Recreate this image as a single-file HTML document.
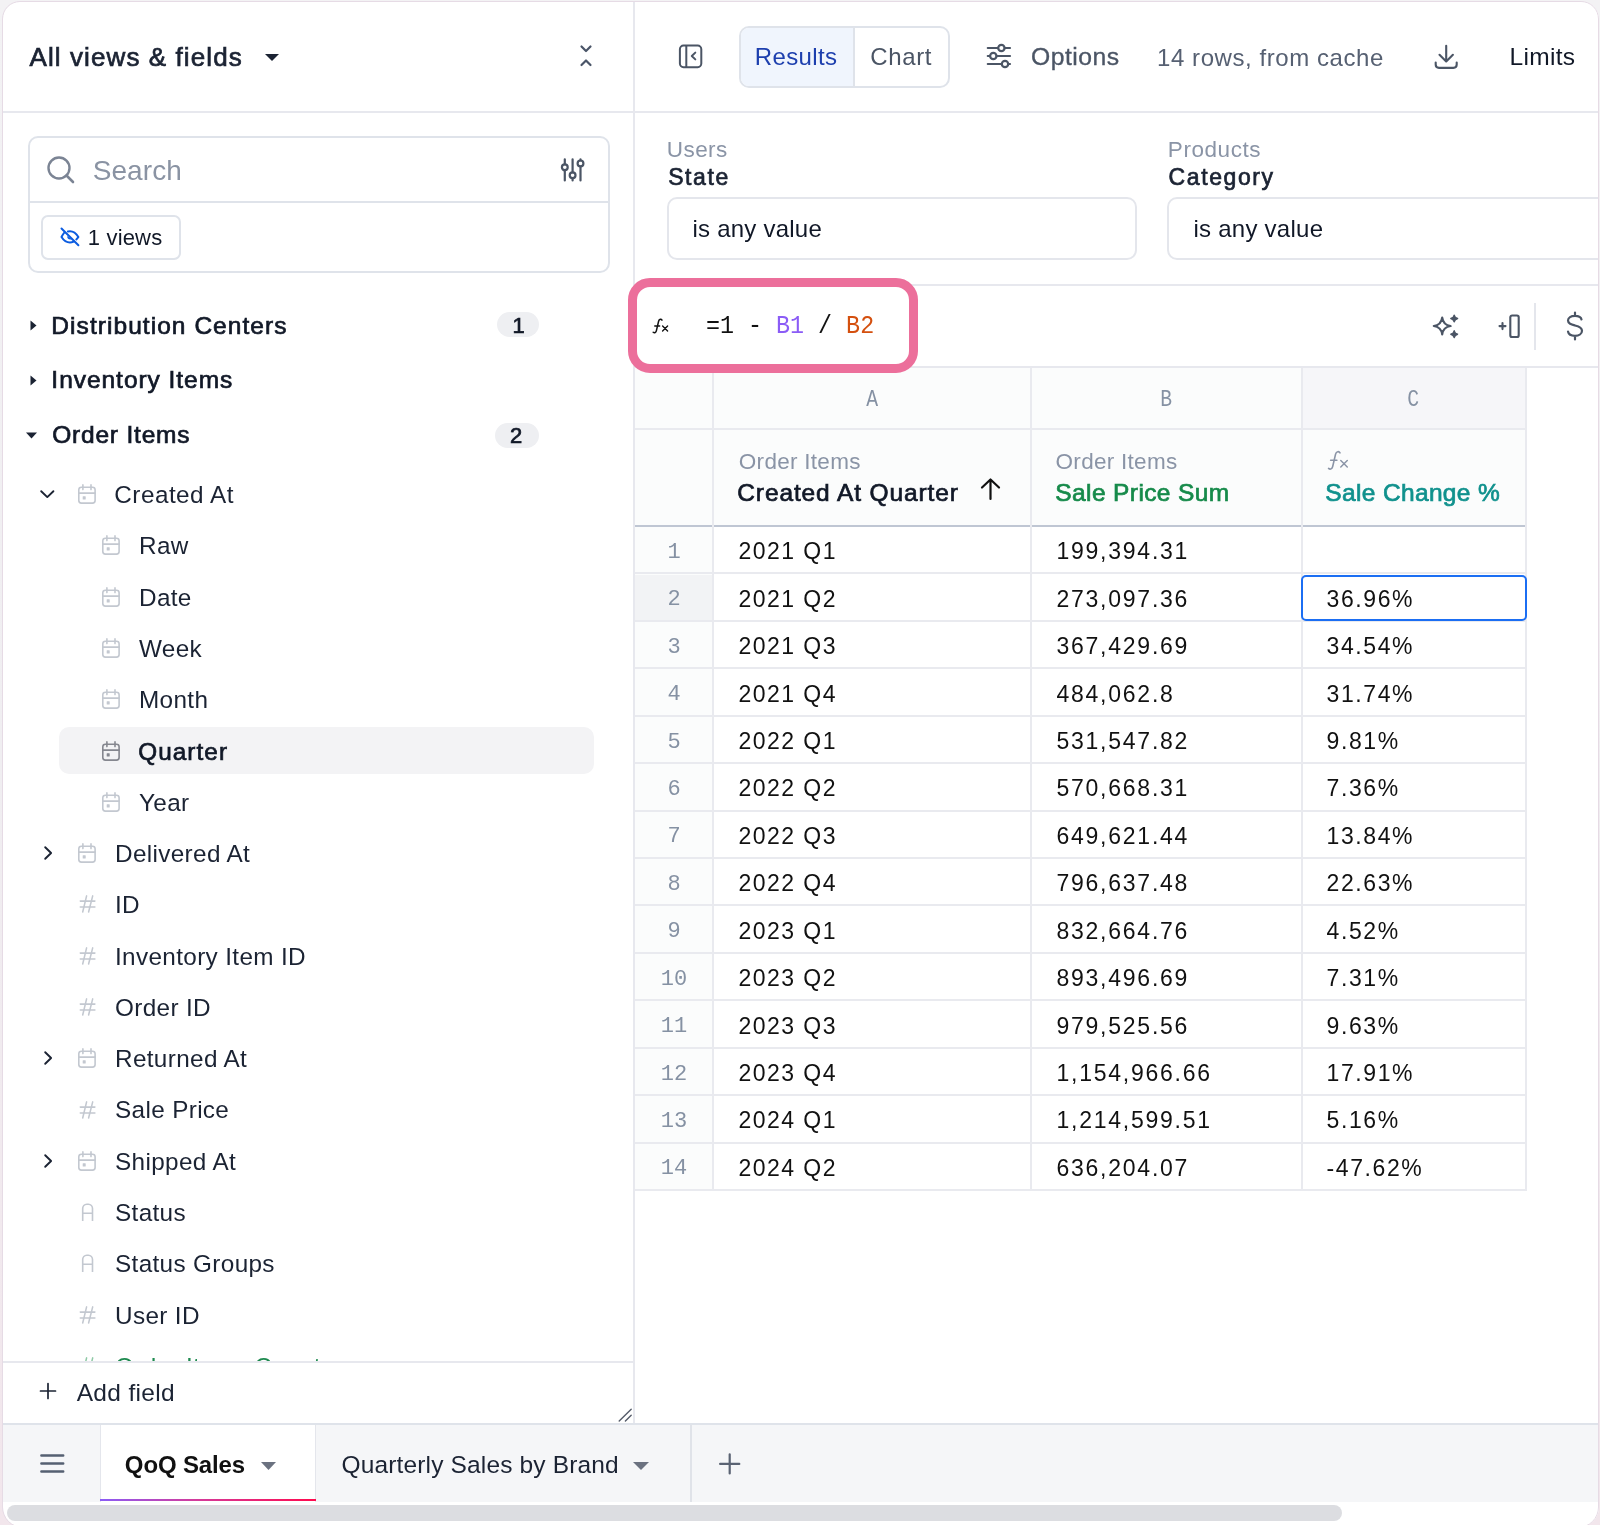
<!DOCTYPE html>
<html><head><meta charset="utf-8">
<style>
*{box-sizing:border-box;margin:0;padding:0}
html,body{width:1600px;height:1525px;overflow:hidden;background:#efeff1;font-family:"Liberation Sans",sans-serif;color:#1b2333}
#bg{position:absolute;left:0;top:0;width:1600px;height:1525px;background:linear-gradient(180deg,#f3f2f4 0%,#f0eef1 50%,#f2e6ec 100%)}
#clip{position:absolute;left:2.5px;top:1.5px;width:1596px;height:1525px;border-radius:17px 17px 20px 20px;overflow:hidden;background:#fff}
#app{position:absolute;left:-2.5px;top:-1.5px;width:1600px;height:1525px;will-change:opacity;opacity:0.999}
#frame{position:absolute;left:2.2px;top:0.8px;width:1597.1px;height:1527px;border-style:solid;border-color:#e6dbe5;border-width:1.3px 1.4px 1.6px 1.9px;border-radius:18px 18px 21px 21px;pointer-events:none}
.a{position:absolute}
.t{position:absolute;white-space:nowrap;line-height:1}
svg{position:absolute;overflow:visible}
</style></head>
<body>
<div id="bg"></div>
<div id="clip"><div id="app">
<div class="t" id="t_allviews" style="left:29.53px;top:43.99px;font-size:26px;color:#1b2333;-webkit-text-stroke:0.7px currentColor;letter-spacing:1.092px;">All views &amp; fields</div>
<svg style="left:265px;top:53.5px;" width="14" height="7" viewBox="0 0 14 7"><path d="M0 0H14L7 7Z" fill="#1b2333"/></svg>
<svg style="left:579px;top:44px;" width="14" height="24" viewBox="0 0 14 24"><path d="M2.5 2.5L7 7L11.5 2.5M2.5 21L7 16.5L11.5 21" fill="none" stroke="#4a5568" stroke-width="2.2" stroke-linecap="round" stroke-linejoin="round"/></svg>
<div class="a" style="left:0px;top:111px;width:1600px;height:2px;background:#e7e8ee"></div>
<div class="a" style="left:633px;top:0px;width:2px;height:1423px;background:#e7e8ee"></div>
<div class="a" style="left:27.75px;top:136.25px;width:582px;height:136.65px;border:2px solid #dfe3ea;border-radius:10px;"></div>
<div class="a" style="left:27.75px;top:200.9px;width:582px;height:2px;background:#dfe3ea"></div>
<svg style="left:46px;top:155px;" width="30" height="30" viewBox="0 0 30 30"><circle cx="13" cy="13" r="10.5" fill="none" stroke="#7b8494" stroke-width="2.4"/><path d="M20.5 20.5L27 27" stroke="#7b8494" stroke-width="2.6" stroke-linecap="round"/></svg>
<div class="t" id="t_search" style="left:92.64px;top:156.90px;font-size:28px;color:#8a93a3;letter-spacing:0.1px;">Search</div>
<svg style="left:560px;top:157px;" width="26" height="26" viewBox="0 0 26 26"><g fill="none" stroke="#4b5565" stroke-width="2.2" stroke-linecap="round"><path d="M4.8 2.3V7.3M4.8 13.3V23.4M12.6 2.3V15.3M12.6 21.3V23.4M20.5 2.3V3.5M20.5 9.5V23.4"/><circle cx="4.8" cy="10.3" r="2.9"/><circle cx="12.6" cy="18.3" r="2.9"/><circle cx="20.5" cy="6.4" r="2.9"/></g></svg>
<div class="a" style="left:40.9px;top:215px;width:139.85px;height:44.5px;border:2px solid #dfe3ea;border-radius:7px;"></div>
<svg style="left:60px;top:227px;" width="20" height="20" viewBox="0 0 20 20"><g fill="none" stroke="#0b5ce0" stroke-width="2" stroke-linecap="round" stroke-linejoin="round"><path d="M7.9 4.4C9 4.3 9.6 4.3 10 4.3C13.5 4.3 16.2 6.5 18.4 10C17.8 11 17.1 11.7 16.3 12.4"/><path d="M4.3 5.6C3.3 6.6 2.4 8.1 1.5 10C3.7 13.5 6.5 15.4 10 15.4C11.5 15.4 12.7 15 13.9 14.6"/><path d="M1.5 1.5L18.4 18.2"/></g><path d="M7.2 9C7 10.8 8 12.6 10.4 12.6C11 12.6 11.4 12.5 11.8 12.3Z" fill="#0b5ce0"/></svg>
<div class="t" id="t_1views" style="left:87.80px;top:226.88px;font-size:22px;color:#111827;letter-spacing:0.166px;">1 views</div>
<svg style="left:29.5px;top:320px;" width="7" height="11" viewBox="0 0 7 11"><path d="M0.5 0.5L6.5 5.5L0.5 10.5Z" fill="#1b2333"/></svg>
<div class="t" id="t_dc" style="left:51.36px;top:313.66px;font-size:24.5px;color:#111827;-webkit-text-stroke:0.7px currentColor;letter-spacing:1.051px;">Distribution Centers</div>
<div class="a" style="left:496.5px;top:312px;width:42.5px;height:25px;background:#eeeff2;border-radius:13px"></div>
<div class="t" style="left:512.50px;top:314.58px;font-size:22px;color:#111827;-webkit-text-stroke:0.7px currentColor;">1</div>
<svg style="left:29.5px;top:375px;" width="7" height="11" viewBox="0 0 7 11"><path d="M0.5 0.5L6.5 5.5L0.5 10.5Z" fill="#1b2333"/></svg>
<div class="t" id="t_ii" style="left:51.36px;top:368.46px;font-size:24.5px;color:#111827;-webkit-text-stroke:0.7px currentColor;letter-spacing:0.964px;">Inventory Items</div>
<svg style="left:26px;top:432px;" width="11" height="7" viewBox="0 0 11 7"><path d="M0 0.5H11L5.5 6.5Z" fill="#1b2333"/></svg>
<div class="t" id="t_oi" style="left:52.14px;top:423.46px;font-size:24.5px;color:#111827;-webkit-text-stroke:0.7px currentColor;letter-spacing:0.81px;">Order Items</div>
<div class="a" style="left:494.5px;top:422.5px;width:44.5px;height:25px;background:#eeeff2;border-radius:13px"></div>
<div class="t" style="left:510.00px;top:424.68px;font-size:22px;color:#111827;-webkit-text-stroke:0.7px currentColor;">2</div>
<svg style="left:78px;top:484.2px;" width="18" height="19" viewBox="0 0 18 19"><g fill="none" stroke="#c3c8d0" stroke-width="1.6" stroke-linecap="round"><rect x="0.8" y="3.2" width="16.3" height="15.9" rx="2.6"/><path d="M0.8 9.1H17.1M4.9 0.9V5.6M13 0.9V5.6"/></g><rect x="4.7" y="12.2" width="3" height="3.4" rx="0.5" fill="#c3c8d0"/></svg>
<svg style="left:40px;top:489.5px;" width="15" height="9" viewBox="0 0 15 9"><path d="M1.2 1.2L7.3 7.1L13.4 1.2" fill="none" stroke="#1b2333" stroke-width="1.9" stroke-linecap="round" stroke-linejoin="round"/></svg>
<div class="t" id="t_item0" style="left:114.30px;top:483.13px;font-size:24.3px;color:#1b2333;letter-spacing:0.479px;">Created At</div>
<svg style="left:101.5px;top:535.48px;" width="18" height="19" viewBox="0 0 18 19"><g fill="none" stroke="#c3c8d0" stroke-width="1.6" stroke-linecap="round"><rect x="0.8" y="3.2" width="16.3" height="15.9" rx="2.6"/><path d="M0.8 9.1H17.1M4.9 0.9V5.6M13 0.9V5.6"/></g><rect x="4.7" y="12.2" width="3" height="3.4" rx="0.5" fill="#c3c8d0"/></svg>
<div class="t" id="t_item1" style="left:139.00px;top:534.41px;font-size:24.3px;color:#1b2333;letter-spacing:0.35px;">Raw</div>
<svg style="left:101.5px;top:586.76px;" width="18" height="19" viewBox="0 0 18 19"><g fill="none" stroke="#c3c8d0" stroke-width="1.6" stroke-linecap="round"><rect x="0.8" y="3.2" width="16.3" height="15.9" rx="2.6"/><path d="M0.8 9.1H17.1M4.9 0.9V5.6M13 0.9V5.6"/></g><rect x="4.7" y="12.2" width="3" height="3.4" rx="0.5" fill="#c3c8d0"/></svg>
<div class="t" id="t_item2" style="left:139.00px;top:585.69px;font-size:24.3px;color:#1b2333;letter-spacing:0.35px;">Date</div>
<svg style="left:101.5px;top:638.04px;" width="18" height="19" viewBox="0 0 18 19"><g fill="none" stroke="#c3c8d0" stroke-width="1.6" stroke-linecap="round"><rect x="0.8" y="3.2" width="16.3" height="15.9" rx="2.6"/><path d="M0.8 9.1H17.1M4.9 0.9V5.6M13 0.9V5.6"/></g><rect x="4.7" y="12.2" width="3" height="3.4" rx="0.5" fill="#c3c8d0"/></svg>
<div class="t" id="t_item3" style="left:139.00px;top:636.97px;font-size:24.3px;color:#1b2333;letter-spacing:0.35px;">Week</div>
<svg style="left:101.5px;top:689.3199999999999px;" width="18" height="19" viewBox="0 0 18 19"><g fill="none" stroke="#c3c8d0" stroke-width="1.6" stroke-linecap="round"><rect x="0.8" y="3.2" width="16.3" height="15.9" rx="2.6"/><path d="M0.8 9.1H17.1M4.9 0.9V5.6M13 0.9V5.6"/></g><rect x="4.7" y="12.2" width="3" height="3.4" rx="0.5" fill="#c3c8d0"/></svg>
<div class="t" id="t_item4" style="left:139.00px;top:688.25px;font-size:24.3px;color:#1b2333;letter-spacing:0.35px;">Month</div>
<div class="a" style="left:59px;top:726.5px;width:535px;height:47.5px;background:#f3f3f5;border-radius:10px"></div>
<svg style="left:101.5px;top:740.5999999999999px;" width="18" height="19" viewBox="0 0 18 19"><g fill="none" stroke="#85878f" stroke-width="1.6" stroke-linecap="round"><rect x="0.8" y="3.2" width="16.3" height="15.9" rx="2.6"/><path d="M0.8 9.1H17.1M4.9 0.9V5.6M13 0.9V5.6"/></g><rect x="4.7" y="12.2" width="3" height="3.4" rx="0.5" fill="#85878f"/></svg>
<div class="t" id="t_item5" style="left:138.30px;top:739.53px;font-size:24.3px;color:#111827;-webkit-text-stroke:0.7px currentColor;letter-spacing:1.05px;">Quarter</div>
<svg style="left:101.5px;top:791.88px;" width="18" height="19" viewBox="0 0 18 19"><g fill="none" stroke="#c3c8d0" stroke-width="1.6" stroke-linecap="round"><rect x="0.8" y="3.2" width="16.3" height="15.9" rx="2.6"/><path d="M0.8 9.1H17.1M4.9 0.9V5.6M13 0.9V5.6"/></g><rect x="4.7" y="12.2" width="3" height="3.4" rx="0.5" fill="#c3c8d0"/></svg>
<div class="t" id="t_item6" style="left:139.00px;top:790.81px;font-size:24.3px;color:#1b2333;letter-spacing:0.35px;">Year</div>
<svg style="left:78px;top:843.1600000000001px;" width="18" height="19" viewBox="0 0 18 19"><g fill="none" stroke="#c3c8d0" stroke-width="1.6" stroke-linecap="round"><rect x="0.8" y="3.2" width="16.3" height="15.9" rx="2.6"/><path d="M0.8 9.1H17.1M4.9 0.9V5.6M13 0.9V5.6"/></g><rect x="4.7" y="12.2" width="3" height="3.4" rx="0.5" fill="#c3c8d0"/></svg>
<svg style="left:43.5px;top:846.1600000000001px;" width="9" height="15" viewBox="0 0 9 15"><path d="M1.2 1.2L7.1 7L1.2 12.8" fill="none" stroke="#1b2333" stroke-width="1.9" stroke-linecap="round" stroke-linejoin="round"/></svg>
<div class="t" id="t_item7" style="left:115.00px;top:842.09px;font-size:24.3px;color:#1b2333;letter-spacing:0.35px;">Delivered At</div>
<svg style="left:77.5px;top:895.44px;" width="18" height="18" viewBox="0 0 18 18"><g fill="none" stroke="#c3c8d0" stroke-width="1.55" stroke-linecap="round"><path d="M8.6 0.9L4.7 17M14.7 0.9L10.6 17M2.3 6.1H16.9M2.3 12H16.9"/></g></svg>
<div class="t" id="t_item8" style="left:115.00px;top:893.37px;font-size:24.3px;color:#1b2333;letter-spacing:0.35px;">ID</div>
<svg style="left:77.5px;top:946.72px;" width="18" height="18" viewBox="0 0 18 18"><g fill="none" stroke="#c3c8d0" stroke-width="1.55" stroke-linecap="round"><path d="M8.6 0.9L4.7 17M14.7 0.9L10.6 17M2.3 6.1H16.9M2.3 12H16.9"/></g></svg>
<div class="t" id="t_item9" style="left:115.00px;top:944.65px;font-size:24.3px;color:#1b2333;letter-spacing:0.35px;">Inventory Item ID</div>
<svg style="left:77.5px;top:998.0px;" width="18" height="18" viewBox="0 0 18 18"><g fill="none" stroke="#c3c8d0" stroke-width="1.55" stroke-linecap="round"><path d="M8.6 0.9L4.7 17M14.7 0.9L10.6 17M2.3 6.1H16.9M2.3 12H16.9"/></g></svg>
<div class="t" id="t_item10" style="left:115.00px;top:995.93px;font-size:24.3px;color:#1b2333;letter-spacing:0.35px;">Order ID</div>
<svg style="left:78px;top:1048.28px;" width="18" height="19" viewBox="0 0 18 19"><g fill="none" stroke="#c3c8d0" stroke-width="1.6" stroke-linecap="round"><rect x="0.8" y="3.2" width="16.3" height="15.9" rx="2.6"/><path d="M0.8 9.1H17.1M4.9 0.9V5.6M13 0.9V5.6"/></g><rect x="4.7" y="12.2" width="3" height="3.4" rx="0.5" fill="#c3c8d0"/></svg>
<svg style="left:43.5px;top:1051.28px;" width="9" height="15" viewBox="0 0 9 15"><path d="M1.2 1.2L7.1 7L1.2 12.8" fill="none" stroke="#1b2333" stroke-width="1.9" stroke-linecap="round" stroke-linejoin="round"/></svg>
<div class="t" id="t_item11" style="left:115.00px;top:1047.21px;font-size:24.3px;color:#1b2333;letter-spacing:0.35px;">Returned At</div>
<svg style="left:77.5px;top:1100.56px;" width="18" height="18" viewBox="0 0 18 18"><g fill="none" stroke="#c3c8d0" stroke-width="1.55" stroke-linecap="round"><path d="M8.6 0.9L4.7 17M14.7 0.9L10.6 17M2.3 6.1H16.9M2.3 12H16.9"/></g></svg>
<div class="t" id="t_item12" style="left:115.00px;top:1098.49px;font-size:24.3px;color:#1b2333;letter-spacing:0.35px;">Sale Price</div>
<svg style="left:78px;top:1150.84px;" width="18" height="19" viewBox="0 0 18 19"><g fill="none" stroke="#c3c8d0" stroke-width="1.6" stroke-linecap="round"><rect x="0.8" y="3.2" width="16.3" height="15.9" rx="2.6"/><path d="M0.8 9.1H17.1M4.9 0.9V5.6M13 0.9V5.6"/></g><rect x="4.7" y="12.2" width="3" height="3.4" rx="0.5" fill="#c3c8d0"/></svg>
<svg style="left:43.5px;top:1153.84px;" width="9" height="15" viewBox="0 0 9 15"><path d="M1.2 1.2L7.1 7L1.2 12.8" fill="none" stroke="#1b2333" stroke-width="1.9" stroke-linecap="round" stroke-linejoin="round"/></svg>
<div class="t" id="t_item13" style="left:115.00px;top:1149.77px;font-size:24.3px;color:#1b2333;letter-spacing:0.35px;">Shipped At</div>
<svg style="left:79.5px;top:1202.6200000000001px;" width="14" height="19" viewBox="0 0 14 19"><g fill="none" stroke="#c3c8d0" stroke-width="1.6"><path d="M2.7 18V5.6C2.7 3.2 4.4 1.3 6.8 1.3H8.4C10.8 1.3 12.5 3.2 12.5 5.6V18M2.7 10.3H12.5"/></g></svg>
<div class="t" id="t_item14" style="left:115.00px;top:1201.05px;font-size:24.3px;color:#1b2333;letter-spacing:0.35px;">Status</div>
<svg style="left:79.5px;top:1253.9px;" width="14" height="19" viewBox="0 0 14 19"><g fill="none" stroke="#c3c8d0" stroke-width="1.6"><path d="M2.7 18V5.6C2.7 3.2 4.4 1.3 6.8 1.3H8.4C10.8 1.3 12.5 3.2 12.5 5.6V18M2.7 10.3H12.5"/></g></svg>
<div class="t" id="t_item15" style="left:115.00px;top:1252.33px;font-size:24.3px;color:#1b2333;letter-spacing:0.35px;">Status Groups</div>
<svg style="left:77.5px;top:1305.68px;" width="18" height="18" viewBox="0 0 18 18"><g fill="none" stroke="#c3c8d0" stroke-width="1.55" stroke-linecap="round"><path d="M8.6 0.9L4.7 17M14.7 0.9L10.6 17M2.3 6.1H16.9M2.3 12H16.9"/></g></svg>
<div class="t" id="t_item16" style="left:115.00px;top:1303.61px;font-size:24.3px;color:#1b2333;letter-spacing:0.35px;">User ID</div>
<svg style="left:77.5px;top:1356.96px;" width="18" height="18" viewBox="0 0 18 18"><g fill="none" stroke="#8fc9a6" stroke-width="1.55" stroke-linecap="round"><path d="M8.6 0.9L4.7 17M14.7 0.9L10.6 17M2.3 6.1H16.9M2.3 12H16.9"/></g></svg>
<div class="t" id="t_item17" style="left:115.00px;top:1354.89px;font-size:24.3px;color:#1e8a4f;letter-spacing:0.35px;">Order Items Count</div>
<div class="a" style="left:3px;top:1362px;width:630px;height:61px;background:#fff"></div>
<div class="a" style="left:3px;top:1361px;width:630px;height:2px;background:#e7e8ee"></div>
<svg style="left:39.5px;top:1383px;" width="16" height="16" viewBox="0 0 16 16"><path d="M8 0.5V15.5M0.5 8H15.5" stroke="#1b2333" stroke-width="1.7" stroke-linecap="round"/></svg>
<div class="t" id="t_addfield" style="left:76.70px;top:1381.26px;font-size:24.5px;color:#1b2333;letter-spacing:0.325px;">Add field</div>
<svg style="left:618px;top:1408px;" width="15" height="14" viewBox="0 0 15 14"><path d="M1.2 13L13.2 1.2M7.4 13L13.2 7.2" stroke="#555c6a" stroke-width="1.4" stroke-linecap="round"/></svg>

<svg style="left:678px;top:44px;" width="25" height="24" viewBox="0 0 25 24"><g fill="none" stroke="#4b5565" stroke-width="2" stroke-linejoin="round"><rect x="1.9" y="1.6" width="21.4" height="21.6" rx="3.6"/><path d="M8.3 1.6V23.2"/><path d="M17.3 8.6L13.8 12L17.3 15.4" stroke-linecap="round"/></g></svg>
<div class="a" style="left:738.5px;top:25.5px;width:211px;height:62px;border:2px solid #dfe3ea;border-radius:10px;overflow:hidden;"></div>
<div class="a" style="left:740.5px;top:27.5px;width:113px;height:58px;background:#f0f5fd;border-radius:8px 0 0 8px"></div>
<div class="a" style="left:853px;top:27.5px;width:2px;height:58px;background:#dfe3ea"></div>
<div class="t" id="t_results" style="left:754.76px;top:44.88px;font-size:24px;color:#1d3fae;letter-spacing:0.367px;">Results</div>
<div class="t" id="t_chart" style="left:870.36px;top:44.88px;font-size:24px;color:#4b5565;letter-spacing:0.6px;">Chart</div>
<svg style="left:985px;top:44px;" width="26" height="24" viewBox="0 0 26 24"><g fill="none" stroke="#4b5565" stroke-width="2.2" stroke-linecap="round"><path d="M2.8 4H13.2M19.6 4H25M2.8 12H5.1M11.5 12H25M2.8 20H16.8M23.2 20H25"/><circle cx="16.4" cy="4" r="3.2"/><circle cx="8.3" cy="12" r="3.2"/><circle cx="20" cy="20" r="3.2"/></g></svg>
<div class="t" id="t_options" style="left:1031.08px;top:45.09px;font-size:24.7px;color:#4b5565;-webkit-text-stroke:0.35px currentColor;letter-spacing:0.498px;">Options</div>
<div class="t" id="t_rows" style="left:1157.00px;top:45.88px;font-size:24px;color:#566072;letter-spacing:0.572px;">14 rows, from cache</div>
<svg style="left:1433px;top:44px;" width="26" height="27" viewBox="0 0 26 27"><g fill="none" stroke="#4b5565" stroke-width="2.1" stroke-linecap="round" stroke-linejoin="round"><path d="M13.2 1.8V17.2M6.5 10.8L13.2 17.5L19.9 10.8M2.7 18.5V20.6C2.7 22.5 4 23.9 6 23.9H20.4C22.4 23.9 23.7 22.5 23.7 20.6V18.5"/></g></svg>
<div class="t" id="t_limits" style="left:1509.55px;top:45.26px;font-size:24.5px;color:#111827;letter-spacing:0.32px;">Limits</div>
<div class="t" id="t_users" style="left:666.74px;top:138.95px;font-size:22.5px;color:#8a94a6;letter-spacing:0.45px;">Users</div>
<div class="t" id="t_state" style="left:668.14px;top:166.33px;font-size:23px;color:#1b2333;-webkit-text-stroke:0.7px currentColor;letter-spacing:1.6px;">State</div>
<div class="a" style="left:667px;top:196.7px;width:469.6px;height:63.7px;border:2px solid #e4e6ec;border-radius:10px"></div>
<div class="t" id="t_isany1" style="left:692.44px;top:216.88px;font-size:24px;color:#111827;letter-spacing:0.239px;">is any value</div>
<div class="t" id="t_products" style="left:1167.80px;top:138.95px;font-size:22.5px;color:#8a94a6;letter-spacing:0.571px;">Products</div>
<div class="t" id="t_category" style="left:1168.50px;top:166.33px;font-size:23px;color:#1b2333;-webkit-text-stroke:0.7px currentColor;letter-spacing:1.614px;">Category</div>
<div class="a" style="left:1167.4px;top:196.7px;width:460px;height:63.7px;border:2px solid #e4e6ec;border-radius:10px"></div>
<div class="t" id="t_isany2" style="left:1193.50px;top:216.88px;font-size:24px;color:#111827;letter-spacing:0.25px;">is any value</div>
<div class="a" style="left:635px;top:283.5px;width:965px;height:2px;background:#e7e8ee"></div>
<div class="a" style="left:635px;top:365.5px;width:965px;height:2px;background:#e7e8ee"></div>
<svg style="left:652px;top:318px;" width="17" height="16" viewBox="0 0 17 16"><g transform="scale(1)" fill="none" stroke="#111" stroke-width="1.5" stroke-linecap="round"><path d="M10 2.2C9.3 0.9 7.2 0.8 6.6 3.2L4.4 12.6C4 14.5 2.5 15.3 1.2 14.2M2.8 7.9H7.6"/><path d="M10.6 8L15.6 13M15.6 8L10.6 13" stroke-width="1.35"/></g></svg>
<div class="t" id="t_formula" style="left:705.50px;top:313.83px;font-size:25.8px;color:#111;font-family:'Liberation Mono',monospace;transform:scaleX(0.905);transform-origin:0 50%;">=1 - <span style="color:#8b5cf6">B1</span> / <span style="color:#d4500f">B2</span></div>
<svg style="left:1432px;top:312px;" width="28" height="28" viewBox="0 0 28 28"><path d="M10.2 5.6Q11.21 12.99 18.6 14Q11.21 15.01 10.2 22.4Q9.19 15.01 1.799999999999999 14Q9.19 12.99 10.2 5.6Z" fill="none" stroke="#4b5565" stroke-width="2.2" stroke-linejoin="round"/><path d="M22.2 3.1Q22.88 5.82 25.599999999999998 6.5Q22.88 7.18 22.2 9.9Q21.52 7.18 18.8 6.5Q21.52 5.82 22.2 3.1Z" fill="#4b5565" stroke="#4b5565" stroke-width="1.4" stroke-linejoin="round"/><path d="M22.2 18.8Q22.88 21.52 25.599999999999998 22.2Q22.88 22.88 22.2 25.599999999999998Q21.52 22.88 18.8 22.2Q21.52 21.52 22.2 18.8Z" fill="#4b5565" stroke="#4b5565" stroke-width="1.4" stroke-linejoin="round"/></svg>
<svg style="left:1497px;top:313px;" width="24" height="26" viewBox="0 0 24 26"><g fill="none" stroke="#4b5565" stroke-width="2.1" stroke-linecap="round"><rect x="13.3" y="2.5" width="8.4" height="21.5" rx="1.8"/><path d="M5.5 10.1V16.1M2.5 13.1H8.5"/></g></svg>
<div class="a" style="left:1534px;top:302.5px;width:2px;height:47px;background:#e4e6ec"></div>
<svg style="left:1565px;top:312px;" width="20" height="28" viewBox="0 0 20 28"><path d="M16.5 7.5C16 5 13.5 3.8 10 3.8C6 3.8 3 5.6 3 8.5C3 11.8 6.5 12.6 10 13.5C13.8 14.4 17 15.4 17 18.8C17 21.8 14 23.8 10 23.8C6 23.8 3.5 22.2 3 19.5M10 0.5V3.8M10 23.8V27.5" fill="none" stroke="#4b5565" stroke-width="2.2" stroke-linecap="round"/></svg>
<div class="a" style="left:635px;top:367.5px;width:890px;height:823px;background:#fff"></div>
<div class="a" style="left:635px;top:367.5px;width:890px;height:158px;background:#fbfcfc"></div>
<div class="a" style="left:1301px;top:367.5px;width:224px;height:62px;background:#f6f6f9"></div>
<div class="a" style="left:635px;top:526px;width:78px;height:664px;background:#fbfcfc"></div>
<div class="a" style="left:635px;top:574.5px;width:78px;height:47px;background:#f2f3f5"></div>
<div class="a" style="left:635px;top:428px;width:890px;height:2px;background:#e9eaef"></div>
<div class="a" style="left:635px;top:524.5px;width:890px;height:2.5px;background:#bfc6d3"></div>
<div class="a" style="left:635px;top:572.43px;width:890px;height:2px;background:#e9eaef"></div>
<div class="a" style="left:635px;top:619.86px;width:890px;height:2px;background:#e9eaef"></div>
<div class="a" style="left:635px;top:667.29px;width:890px;height:2px;background:#e9eaef"></div>
<div class="a" style="left:635px;top:714.72px;width:890px;height:2px;background:#e9eaef"></div>
<div class="a" style="left:635px;top:762.15px;width:890px;height:2px;background:#e9eaef"></div>
<div class="a" style="left:635px;top:809.58px;width:890px;height:2px;background:#e9eaef"></div>
<div class="a" style="left:635px;top:857.01px;width:890px;height:2px;background:#e9eaef"></div>
<div class="a" style="left:635px;top:904.44px;width:890px;height:2px;background:#e9eaef"></div>
<div class="a" style="left:635px;top:951.87px;width:890px;height:2px;background:#e9eaef"></div>
<div class="a" style="left:635px;top:999.3px;width:890px;height:2px;background:#e9eaef"></div>
<div class="a" style="left:635px;top:1046.73px;width:890px;height:2px;background:#e9eaef"></div>
<div class="a" style="left:635px;top:1094.16px;width:890px;height:2px;background:#e9eaef"></div>
<div class="a" style="left:635px;top:1141.59px;width:890px;height:2px;background:#e9eaef"></div>
<div class="a" style="left:635px;top:1189.02px;width:890px;height:2px;background:#e9eaef"></div>
<div class="a" style="left:712px;top:367.5px;width:2px;height:823px;background:#e9eaef"></div>
<div class="a" style="left:1029.5px;top:367.5px;width:2px;height:823px;background:#e9eaef"></div>
<div class="a" style="left:1300.5px;top:367.5px;width:2px;height:823px;background:#e9eaef"></div>
<div class="a" style="left:1524.5px;top:367.5px;width:2px;height:823px;background:#e9eaef"></div>
<div class="t" style="left:864.80px;top:387.91px;font-size:24px;color:#8591a3;font-family:'Liberation Mono',monospace;transform:scaleX(0.82);transform-origin:50% 50%;">A</div>
<div class="t" style="left:1158.80px;top:387.91px;font-size:24px;color:#8591a3;font-family:'Liberation Mono',monospace;transform:scaleX(0.82);transform-origin:50% 50%;">B</div>
<div class="t" style="left:1405.80px;top:387.91px;font-size:24px;color:#8591a3;font-family:'Liberation Mono',monospace;transform:scaleX(0.82);transform-origin:50% 50%;">C</div>
<div class="t" id="t_h1a" style="left:738.84px;top:450.75px;font-size:22.5px;color:#8a94a6;letter-spacing:0.28px;">Order Items</div>
<div class="t" id="t_h1b" style="left:737.30px;top:481.26px;font-size:24.5px;color:#111827;-webkit-text-stroke:0.7px currentColor;letter-spacing:0.882px;">Created At Quarter</div>
<svg style="left:980px;top:478px;" width="21" height="22" viewBox="0 0 21 22"><path d="M10.5 1.5V21M2 9.5L10.5 1.5L19 9.5" fill="none" stroke="#111" stroke-width="2.2" stroke-linecap="round" stroke-linejoin="round"/></svg>
<div class="t" id="t_h2a" style="left:1055.58px;top:450.75px;font-size:22.5px;color:#8a94a6;letter-spacing:0.28px;">Order Items</div>
<div class="t" id="t_h2b" style="left:1055.30px;top:481.26px;font-size:24.5px;color:#168a4a;-webkit-text-stroke:0.7px currentColor;letter-spacing:0.392px;">Sale Price Sum</div>
<svg style="left:1326.5px;top:450.3px;" width="22.1" height="20.8" viewBox="0 0 22.1 20.8"><g transform="scale(1.3)" fill="none" stroke="#8a94a6" stroke-width="1.25" stroke-linecap="round"><path d="M10 2.2C9.3 0.9 7.2 0.8 6.6 3.2L4.4 12.6C4 14.5 2.5 15.3 1.2 14.2M2.8 7.9H7.6"/><path d="M10.6 8L15.6 13M15.6 8L10.6 13" stroke-width="1.12"/></g></svg>
<div class="t" id="t_h3b" style="left:1325.30px;top:481.26px;font-size:24.5px;color:#10918d;-webkit-text-stroke:0.7px currentColor;letter-spacing:0.35px;">Sale Change %</div>
<div class="t" style="left:667.40px;top:541.85px;font-size:22px;color:#8591a3;font-family:'Liberation Mono',monospace;">1</div>
<div class="t" id="t_q0" style="left:738.50px;top:540.23px;font-size:23px;color:#111;letter-spacing:1.45px;">2021 Q1</div>
<div class="t" id="t_s0" style="left:1056.50px;top:540.23px;font-size:23px;color:#111;letter-spacing:1.75px;">199,394.31</div>
<div class="t" style="left:667.40px;top:589.28px;font-size:22px;color:#8591a3;font-family:'Liberation Mono',monospace;">2</div>
<div class="t" id="t_q1" style="left:738.50px;top:587.66px;font-size:23px;color:#111;letter-spacing:1.45px;">2021 Q2</div>
<div class="t" id="t_s1" style="left:1056.50px;top:587.66px;font-size:23px;color:#111;letter-spacing:1.75px;">273,097.36</div>
<div class="t" id="t_c1" style="left:1326.50px;top:587.66px;font-size:23px;color:#111;letter-spacing:1.6px;">36.96%</div>
<div class="t" style="left:667.40px;top:636.71px;font-size:22px;color:#8591a3;font-family:'Liberation Mono',monospace;">3</div>
<div class="t" id="t_q2" style="left:738.50px;top:635.09px;font-size:23px;color:#111;letter-spacing:1.45px;">2021 Q3</div>
<div class="t" id="t_s2" style="left:1056.50px;top:635.09px;font-size:23px;color:#111;letter-spacing:1.75px;">367,429.69</div>
<div class="t" id="t_c2" style="left:1326.50px;top:635.09px;font-size:23px;color:#111;letter-spacing:1.6px;">34.54%</div>
<div class="t" style="left:667.40px;top:684.14px;font-size:22px;color:#8591a3;font-family:'Liberation Mono',monospace;">4</div>
<div class="t" id="t_q3" style="left:738.50px;top:682.52px;font-size:23px;color:#111;letter-spacing:1.45px;">2021 Q4</div>
<div class="t" id="t_s3" style="left:1056.50px;top:682.52px;font-size:23px;color:#111;letter-spacing:1.75px;">484,062.8</div>
<div class="t" id="t_c3" style="left:1326.50px;top:682.52px;font-size:23px;color:#111;letter-spacing:1.6px;">31.74%</div>
<div class="t" style="left:667.40px;top:731.57px;font-size:22px;color:#8591a3;font-family:'Liberation Mono',monospace;">5</div>
<div class="t" id="t_q4" style="left:738.50px;top:729.95px;font-size:23px;color:#111;letter-spacing:1.45px;">2022 Q1</div>
<div class="t" id="t_s4" style="left:1056.50px;top:729.95px;font-size:23px;color:#111;letter-spacing:1.75px;">531,547.82</div>
<div class="t" id="t_c4" style="left:1326.50px;top:729.95px;font-size:23px;color:#111;letter-spacing:1.6px;">9.81%</div>
<div class="t" style="left:667.40px;top:779.00px;font-size:22px;color:#8591a3;font-family:'Liberation Mono',monospace;">6</div>
<div class="t" id="t_q5" style="left:738.50px;top:777.38px;font-size:23px;color:#111;letter-spacing:1.45px;">2022 Q2</div>
<div class="t" id="t_s5" style="left:1056.50px;top:777.38px;font-size:23px;color:#111;letter-spacing:1.75px;">570,668.31</div>
<div class="t" id="t_c5" style="left:1326.50px;top:777.38px;font-size:23px;color:#111;letter-spacing:1.6px;">7.36%</div>
<div class="t" style="left:667.40px;top:826.43px;font-size:22px;color:#8591a3;font-family:'Liberation Mono',monospace;">7</div>
<div class="t" id="t_q6" style="left:738.50px;top:824.81px;font-size:23px;color:#111;letter-spacing:1.45px;">2022 Q3</div>
<div class="t" id="t_s6" style="left:1056.50px;top:824.81px;font-size:23px;color:#111;letter-spacing:1.75px;">649,621.44</div>
<div class="t" id="t_c6" style="left:1326.50px;top:824.81px;font-size:23px;color:#111;letter-spacing:1.6px;">13.84%</div>
<div class="t" style="left:667.40px;top:873.86px;font-size:22px;color:#8591a3;font-family:'Liberation Mono',monospace;">8</div>
<div class="t" id="t_q7" style="left:738.50px;top:872.24px;font-size:23px;color:#111;letter-spacing:1.45px;">2022 Q4</div>
<div class="t" id="t_s7" style="left:1056.50px;top:872.24px;font-size:23px;color:#111;letter-spacing:1.75px;">796,637.48</div>
<div class="t" id="t_c7" style="left:1326.50px;top:872.24px;font-size:23px;color:#111;letter-spacing:1.6px;">22.63%</div>
<div class="t" style="left:667.40px;top:921.29px;font-size:22px;color:#8591a3;font-family:'Liberation Mono',monospace;">9</div>
<div class="t" id="t_q8" style="left:738.50px;top:919.67px;font-size:23px;color:#111;letter-spacing:1.45px;">2023 Q1</div>
<div class="t" id="t_s8" style="left:1056.50px;top:919.67px;font-size:23px;color:#111;letter-spacing:1.75px;">832,664.76</div>
<div class="t" id="t_c8" style="left:1326.50px;top:919.67px;font-size:23px;color:#111;letter-spacing:1.6px;">4.52%</div>
<div class="t" style="left:660.80px;top:968.72px;font-size:22px;color:#8591a3;font-family:'Liberation Mono',monospace;">10</div>
<div class="t" id="t_q9" style="left:738.50px;top:967.10px;font-size:23px;color:#111;letter-spacing:1.45px;">2023 Q2</div>
<div class="t" id="t_s9" style="left:1056.50px;top:967.10px;font-size:23px;color:#111;letter-spacing:1.75px;">893,496.69</div>
<div class="t" id="t_c9" style="left:1326.50px;top:967.10px;font-size:23px;color:#111;letter-spacing:1.6px;">7.31%</div>
<div class="t" style="left:660.80px;top:1016.15px;font-size:22px;color:#8591a3;font-family:'Liberation Mono',monospace;">11</div>
<div class="t" id="t_q10" style="left:738.50px;top:1014.53px;font-size:23px;color:#111;letter-spacing:1.45px;">2023 Q3</div>
<div class="t" id="t_s10" style="left:1056.50px;top:1014.53px;font-size:23px;color:#111;letter-spacing:1.75px;">979,525.56</div>
<div class="t" id="t_c10" style="left:1326.50px;top:1014.53px;font-size:23px;color:#111;letter-spacing:1.6px;">9.63%</div>
<div class="t" style="left:660.80px;top:1063.58px;font-size:22px;color:#8591a3;font-family:'Liberation Mono',monospace;">12</div>
<div class="t" id="t_q11" style="left:738.50px;top:1061.96px;font-size:23px;color:#111;letter-spacing:1.45px;">2023 Q4</div>
<div class="t" id="t_s11" style="left:1056.50px;top:1061.96px;font-size:23px;color:#111;letter-spacing:1.75px;">1,154,966.66</div>
<div class="t" id="t_c11" style="left:1326.50px;top:1061.96px;font-size:23px;color:#111;letter-spacing:1.6px;">17.91%</div>
<div class="t" style="left:660.80px;top:1111.01px;font-size:22px;color:#8591a3;font-family:'Liberation Mono',monospace;">13</div>
<div class="t" id="t_q12" style="left:738.50px;top:1109.39px;font-size:23px;color:#111;letter-spacing:1.45px;">2024 Q1</div>
<div class="t" id="t_s12" style="left:1056.50px;top:1109.39px;font-size:23px;color:#111;letter-spacing:1.75px;">1,214,599.51</div>
<div class="t" id="t_c12" style="left:1326.50px;top:1109.39px;font-size:23px;color:#111;letter-spacing:1.6px;">5.16%</div>
<div class="t" style="left:660.80px;top:1158.44px;font-size:22px;color:#8591a3;font-family:'Liberation Mono',monospace;">14</div>
<div class="t" id="t_q13" style="left:738.50px;top:1156.82px;font-size:23px;color:#111;letter-spacing:1.45px;">2024 Q2</div>
<div class="t" id="t_s13" style="left:1056.50px;top:1156.82px;font-size:23px;color:#111;letter-spacing:1.75px;">636,204.07</div>
<div class="t" id="t_c13" style="left:1326.50px;top:1156.82px;font-size:23px;color:#111;letter-spacing:1.6px;">-47.62%</div>
<div class="a" style="left:628px;top:278px;width:290px;height:95px;border:9px solid #ec6f9b;border-radius:22px"></div>
<div class="a" style="left:1300.5px;top:574.5px;width:226px;height:46px;border:2.5px solid #1b6ef3;border-radius:5px"></div>
<div class="a" style="left:0px;top:1422.5px;width:1600px;height:2px;background:#dfe3ea"></div>
<div class="a" style="left:0px;top:1424.5px;width:1600px;height:77px;background:#f5f6f8"></div>
<div class="a" style="left:100px;top:1424.5px;width:216px;height:77px;background:#fff;border-left:1.5px solid #e4e6ec;border-right:1.5px solid #e4e6ec"></div>
<div class="a" style="left:100px;top:1499px;width:216px;height:2.4px;background:linear-gradient(90deg,#8b5cf6,#d43a9a 45%,#ff0a4e)"></div>
<svg style="left:40px;top:1453px;" width="25" height="22" viewBox="0 0 25 22"><path d="M1.4 2.6H23.2M1.4 10.6H23.2M1.4 18.4H23.2" stroke="#556072" stroke-width="2.5" stroke-linecap="round"/></svg>
<div class="t" id="t_tab1" style="left:124.86px;top:1453.38px;font-size:24px;color:#111;font-weight:bold;letter-spacing:-0.15px;">QoQ Sales</div>
<svg style="left:261px;top:1461.5px;" width="15" height="8" viewBox="0 0 15 8"><path d="M0 0H15L7.5 8Z" fill="#6b7280"/></svg>
<div class="t" id="t_tab2" style="left:341.50px;top:1452.96px;font-size:24.5px;color:#1b2333;letter-spacing:0.15px;">Quarterly Sales by Brand</div>
<svg style="left:633px;top:1461.5px;" width="16" height="8" viewBox="0 0 16 8"><path d="M0 0H16L8 8Z" fill="#6b7280"/></svg>
<div class="a" style="left:690px;top:1424.5px;width:1.5px;height:77px;background:#e0e3e9"></div>
<svg style="left:719px;top:1453px;" width="22" height="22" viewBox="0 0 22 22"><path d="M10.7 1.3V20.5M1.1 10.9H20.3" stroke="#5a6373" stroke-width="2.2" stroke-linecap="round"/></svg>
<div class="a" style="left:0px;top:1501.5px;width:1600px;height:30px;background:#fff"></div>
<div class="a" style="left:7px;top:1505px;width:1335px;height:16px;background:#dcdde1;border-radius:8px"></div>

</div></div>
<div id="frame"></div>
</body></html>
